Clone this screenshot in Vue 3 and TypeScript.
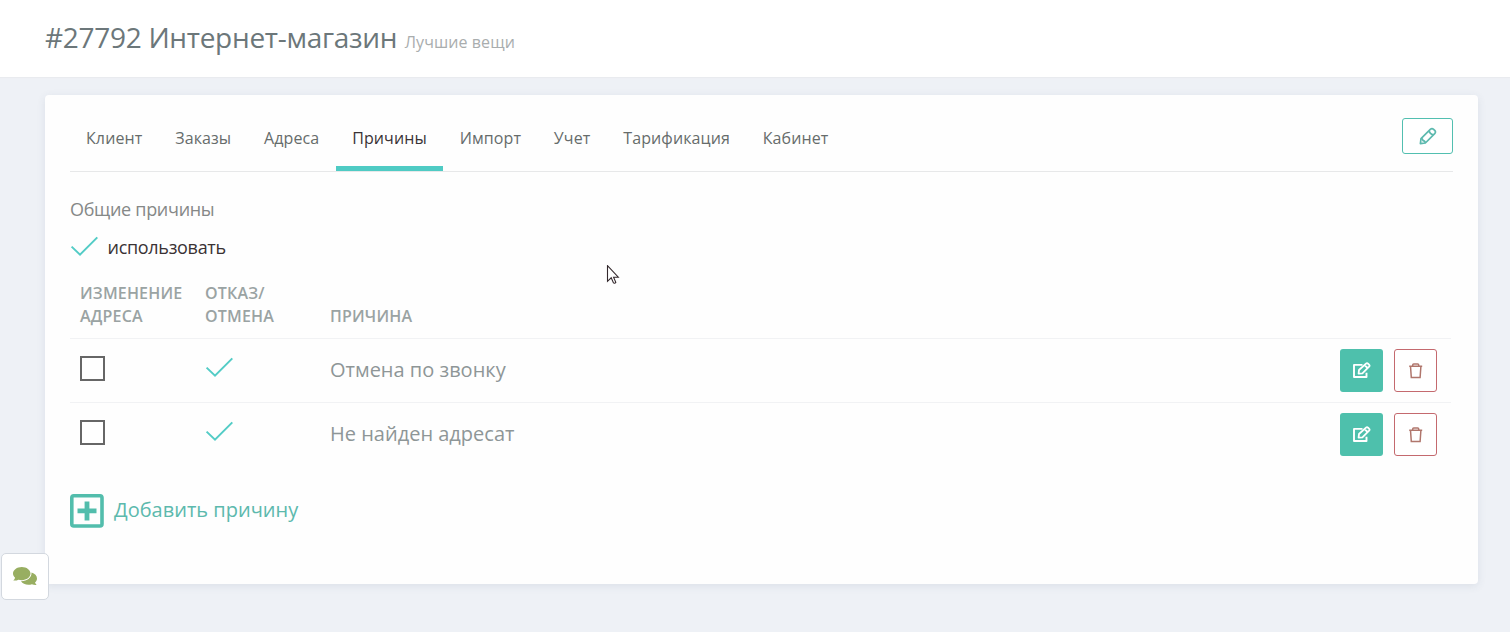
<script setup lang="ts">
import { ref } from 'vue'

interface Reason {
  id: number
  title: string
  address: boolean
  cancel: boolean
}

const tabs: string[] = ['Клиент', 'Заказы', 'Адреса', 'Причины', 'Импорт', 'Учет', 'Тарификация', 'Кабинет']
const active = ref<string>('Причины')
const reasons = ref<Reason[]>([
  { id: 1, title: 'Отмена по звонку', address: false, cancel: true },
  { id: 2, title: 'Не найден адресат', address: false, cancel: true },
])
</script>

<template>
  <div class="page">
    <header class="head">
      <h1><span class="name">#27792 Интернет-магазин</span><small>Лучшие вещи</small></h1>
    </header>

    <main class="card">
      <div class="bar">
        <nav class="tabs">
          <a v-for="t in tabs" :key="t" class="tab" :class="{ active: t === active }" @click="active = t"><span>{{ t }}</span></a>
        </nav>
        <button class="edit-main" aria-label="Редактировать">
          <svg width="18" height="18" viewBox="0 0 18 18" fill="none" stroke="#5cb9ae" stroke-width="1.7" stroke-linejoin="round">
            <path d="M1.4 16.6 2 11.6 11.3 2.3Q13 .8 14.6 2.3L15.7 3.4Q17.2 5 15.7 6.7L6.4 16ZM2 11.6Q3.8 11.4 4 13.6 6.2 13.8 6.4 16M10.2 3.6Q10.6 7 14.4 7.8" />
          </svg>
        </button>
      </div>

      <h2>Общие причины</h2>
      <div class="use">
        <svg class="tick" width="28" height="22" viewBox="0 0 28 22"><path d="M1.6 10.6 10 18.6 27.3 1.4" /></svg>
        <span class="use-text">использовать</span>
      </div>

      <div class="table">
        <div class="row thead">
          <div class="col-a"><span>Изменение<br />адреса</span></div>
          <div class="col-b"><span>Отказ/<br />отмена</span></div>
          <div class="col-c"><span>Причина</span></div>
        </div>
        <div v-for="r in reasons" :key="r.id" class="row item">
          <div class="col-a">
            <svg v-if="r.address" class="tick" width="28" height="22" viewBox="0 0 28 22"><path d="M1.6 10.6 10 18.6 27.3 1.4" /></svg>
            <span v-else class="box"></span>
          </div>
          <div class="col-b">
            <svg v-if="r.cancel" class="tick" width="28" height="22" viewBox="0 0 28 22"><path d="M1.6 10.6 10 18.6 27.3 1.4" /></svg>
            <span v-else class="box"></span>
          </div>
          <div class="col-c"><span class="title">{{ r.title }}</span></div>
          <div class="actions">
            <button class="btn edit" aria-label="Изменить">
              <svg width="19" height="17" viewBox="0 0 19 17" fill="none" stroke="#fff" stroke-width="1.9" stroke-linejoin="round">
                <path d="M10.5 2.9H2V15H14.5V10.8" />
                <path d="M6.6 11.7 7 8 14 1.7Q15 .8 16.1 1.7L17.2 2.8Q18 3.7 17.1 4.7L10.4 11.3ZM12.6 3.2 15.5 6" stroke-width="1.8" />
              </svg>
            </button>
            <button class="btn del" aria-label="Удалить">
              <svg width="14" height="16" viewBox="0 0 14 16" fill="none" stroke="#b0766c" stroke-width="1.5">
                <path d="M.2 3.2H13.2M3.7 3V1.9Q3.7 1 4.7 1H8.7Q9.7 1 9.7 1.9V3M1.5 3.2 2.3 14.5H11.1L11.9 3.2" />
              </svg>
            </button>
          </div>
        </div>
      </div>

      <a class="add">
        <svg width="34" height="34" viewBox="0 0 34 34" fill="none" stroke="#52bdac">
          <rect x="1.8" y="1.8" width="30.2" height="30.2" rx="2" stroke-width="3.6" />
          <path d="M17 7.4V26.4M7.5 16.9H26.5" stroke-width="4.8" />
        </svg>
        <span>Добавить причину</span>
      </a>
    </main>

    <button class="chat" aria-label="Чат">
      <svg width="24" height="20" viewBox="0 0 24 20" fill="#98ae61">
        <path d="M18.5 5.5C21.8 6.4 24 8.6 24 11.4C24 13 23.2 14.4 22 15.5C22.3 16.5 22.9 17.3 23.6 18C21.9 18.2 20.3 17.8 18.9 17.2C14.5 18.6 9.8 17.1 8 14.3C14.4 14.2 18.9 10.3 18.5 5.5Z" />
        <path d="M8.8 0C13.6 0 17.5 2.9 17.5 6.6C17.5 10.3 13.6 13.2 8.8 13.2C7.6 13.2 6.4 13 5.4 12.7C3.9 13.5 2.2 13.8.3 13.5C1.2 12.7 1.8 11.7 2.1 10.8C.8 9.7 0 8.2 0 6.6C0 2.9 4 0 8.8 0Z" />
      </svg>
    </button>

    <svg class="cursor" width="14" height="21" viewBox="0 0 14 21" fill="#fff" stroke="#33282c" stroke-width="1.1">
      <path d="M1.5 .7V16.3L5.2 12.8 7.5 17.9Q8.6 18.8 9.8 17.3L7.6 12.2H12.3Z" />
    </svg>
  </div>
</template>

<style>
html,
body {
  margin: 0;
  background: #eef1f6;
}
</style>

<style scoped>
.page {
  position: relative;
  height: 632px;
  overflow: hidden;
  background: #eef1f6;
  font-family: 'Open Sans', 'Noto Sans', sans-serif;
}
.page * {
  box-sizing: border-box;
}
.head {
  height: 77px;
  background: #fff;
  padding: 17px 45px 0;
  box-shadow: 0 1px 1px #e9ebef;
}
h1 {
  margin: 0;
  font-size: 28px;
  line-height: 40px;
  font-weight: 400;
  color: #6c777a;
  white-space: nowrap;
}
.name {
  letter-spacing: -0.29px;
}
h1 small {
  margin-left: 7.5px;
  font-size: 16px;
  letter-spacing: 0.09px;
  color: #a9adae;
}
.card {
  margin: 18px 32px 0 45px;
  height: 489px;
  padding: 0 25px;
  background: #fefefe;
  border-radius: 4px;
  box-shadow: 0 2px 8px rgba(60, 80, 110, 0.1);
}
.bar {
  display: flex;
  justify-content: space-between;
  height: 77px;
  border-bottom: 1px solid #e7e8e9;
}
.tabs {
  display: flex;
}
.tab {
  height: 76px;
  padding: 32px 16px 0;
  margin-right: 0.8px;
  font-size: 16px;
  line-height: 22px;
  letter-spacing: 0.11px;
  color: #666c6b;
  border-bottom: 5px solid transparent;
}
.tab.active {
  color: #3a3336;
  border-color: #4fcbc4;
}
.edit-main {
  width: 51px;
  height: 36px;
  margin-top: 23px;
  padding: 0;
  border: 1px solid #52bfb0;
  border-radius: 3px;
  background: #fff;
  display: flex;
  align-items: center;
  justify-content: center;
}
h2 {
  margin: 24px 0 0;
  font-size: 18px;
  line-height: 26px;
  letter-spacing: -0.3px;
  font-weight: 400;
  color: #858887;
}
.use {
  display: flex;
  align-items: center;
  height: 24px;
  margin-top: 13px;
  font-size: 18px;
  letter-spacing: -0.3px;
  color: #3a3234;
}
.use-text {
  margin-left: 9.5px;
}
.tick {
  display: block;
  fill: none;
  stroke: #53ccc6;
  stroke-width: 2;
}
.table {
  margin-top: 12px;
  width: 1381px;
}
.row {
  display: grid;
  grid-template-columns: 125px 125px 1fr auto;
  padding: 0 14px 0 10px;
}
.thead {
  height: 67px;
  padding-top: 11px;
  align-items: end;
  padding-bottom: 10px;
  font-size: 16px;
  line-height: 23px;
  letter-spacing: 0.18px;
  font-weight: 600;
  text-transform: uppercase;
  color: #9aa3a3;
}
.item {
  height: 64px;
  border-top: 1px solid #f1f2f4;
  align-items: center;
}
.item .col-a {
  margin-top: -4px;
}
.item .col-b {
  margin-top: -6px;
}
.item .col-c {
  margin-top: -2px;
}
.box {
  display: block;
  width: 25px;
  height: 25px;
  border: 2px solid #666;
}
.title {
  font-size: 20px;
  color: #8e9697;
}
.actions {
  display: flex;
  gap: 11px;
}
.btn {
  width: 43px;
  height: 43px;
  padding: 0;
  border: 0;
  border-radius: 3px;
  display: flex;
  align-items: center;
  justify-content: center;
}
.btn.edit {
  background: #4ec0ac;
}
.btn.del {
  background: #fff;
  border: 1px solid #c4696e;
}
.add {
  display: flex;
  align-items: center;
  gap: 10px;
  width: max-content;
  margin-top: 28px;
  font-size: 20px;
  color: #5cb9ad;
}
.add span {
  margin-top: -4px;
}
.chat {
  position: absolute;
  left: 1px;
  top: 553px;
  width: 48px;
  height: 47px;
  padding: 0;
  background: #fff;
  border: 1px solid #d3d8df;
  border-radius: 5px;
  display: flex;
  align-items: center;
  justify-content: center;
}
.cursor {
  position: absolute;
  left: 606px;
  top: 265px;
}
</style>
